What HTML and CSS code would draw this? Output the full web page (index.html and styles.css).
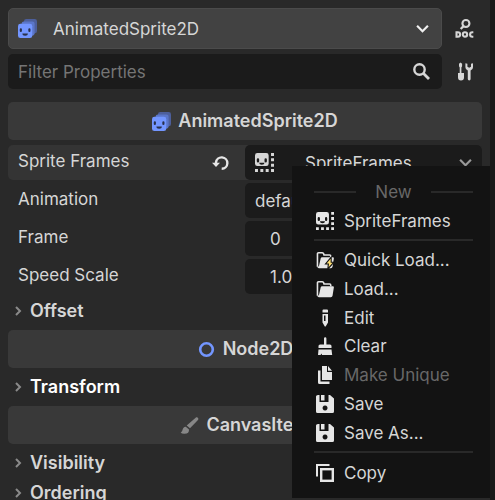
FILE: index.html
```html
<!DOCTYPE html>
<html lang="en">
<head>
<meta charset="utf-8">
<title>Inspector</title>
<link rel="stylesheet" href="styles.css">
</head>
<body>
<svg class="defs" aria-hidden="true">
  <symbol id="animated-sprite" viewBox="0 0 16 16">
    <rect x="5" y="0" width="11" height="12" rx="2" fill="#4d5f9b"/>
    <rect x="3" y="2" width="11" height="12" rx="2" fill="#5b76c8"/>
    <rect x="0" y="4" width="12" height="12" rx="2" fill="#7396ff"/>
    <path d="M1.500 8.700a.9.900 0 0 1 1.800 0v1.300a.9.900 0 0 1-1.800 0zM8.700 8.700a.9.900 0 0 1 1.800 0v1.300a.9.900 0 0 1-1.800 0zM3.700 12.300h4.600a2.300 1.900 0 0 1-4.600 0z" fill="#29304a"/>
  </symbol>
  <symbol id="sprite-frames" viewBox="0 0 16 16">
    <path fill-rule="evenodd" d="M2 0a2 2 0 0 0-2 2v7a2 2 0 0 0 2 2h7.500a2 2 0 0 0 2-2V2a2 2 0 0 0-2-2zM1.500 5.500a1 1 0 0 1 2 0v1.500a1 1 0 0 1-2 0zM8 5.500a1 1 0 0 1 2 0v1.500a1 1 0 0 1-2 0zM3.500 8.200h4.500a2.200 1.700 0 0 1-4.500 0zM13.500 0H16v2.500h-2.500zM13.500 4.500H16V7h-2.500zM13.500 9H16v2.500h-2.500zM13.500 13.500H16V16h-2.500zM9 13.500h2.500V16H9zM4.500 13.500H7V16H4.500zM0 13.500h2.500V16H0z"/>
  </symbol>
  <symbol id="folder" viewBox="0 0 16 16">
    <path d="M1.300 14V2.500q0-1 1-1h3.300q1 0 1.200 1l.3 1h5q1 0 1 1v1" fill="none" stroke="currentColor" stroke-width="1.400"/>
    <path d="M5.500 5.500H15q1 0 .9 1l-1.200 7.500q-.2 1.300-1.500 1.300H2.500q-1 0-1.400-1.300l1.500-.5L4.200 6.500q.2-1 1.300-1z"/>
  </symbol>
</svg>
<main class="inspector">
  <header class="tools">
    <button class="object" type="button">
      <svg class="icon"><use href="#animated-sprite"/></svg>
      <span class="object-name">AnimatedSprite2D</span>
      <svg class="chevron" viewBox="0 0 12 8"><path d="M1 1.500l5 5 5-5"/></svg>
    </button>
    <button class="tool" type="button" aria-label="Open documentation">
      <svg class="icon" viewBox="0 0 19 20"><g fill="none" stroke="currentColor"><circle cx="11" cy="4.800" r="3.700" stroke-width="2.200"/><path d="M8.500 7.500L5.500 10.500" stroke-width="2.400"/><path d="M1.100 14v4.700H2.500a2.350 2.350 0 0 0 0-4.700zM18.800 13.900h-1a2.400 2.400 0 0 0 0 4.800h1" stroke-width="2.200"/><circle cx="10" cy="16.300" r="2.300" stroke-width="2.200"/></g></svg>
    </button>
    <label class="filter">
      <input type="text" placeholder="Filter Properties" aria-label="Filter Properties">
      <svg class="search" viewBox="0 0 17 17"><g fill="none" stroke="currentColor"><circle cx="6.500" cy="6.500" r="5.200" stroke-width="2.400"/><path d="M10.300 10.300l5.700 5.700" stroke-width="2.800"/></g></svg>
    </label>
    <button class="tool" type="button" aria-label="Property tools">
      <svg class="icon" viewBox="0 0 19 19"><path d="M5.500 0.500l1.600 1.200v2.600l-.7 1.200V11h2.600v4.500a3 3 0 0 1-6 0V11h1.700V5.500L4 4.300V1.700zM10.400 1.200v4a3.700 3.700 0 0 0 2.400 3.400V17a1.400 1.400 0 0 0 2.800 0V8.600A3.700 3.700 0 0 0 18 5.200v-4l-2 .6v3l-1.800 1-1.800-1v-3z"/></svg>
    </button>
  </header>

  <section class="properties">
    <h2 class="category"><svg class="icon"><use href="#animated-sprite"/></svg>AnimatedSprite2D</h2>
    <div class="property active">
      <span class="name">Sprite Frames</span>
      <button class="revert" type="button" aria-label="Revert value"><svg viewBox="0 0 18 16"><path d="M4 9V7.500a5.700 5.700 0 1 1 5.700 6.300" fill="none" stroke="currentColor" stroke-width="2.400"/><path d="M0 7.800h8L4 12z"/></svg></button>
      <button class="value resource" type="button">
        <svg class="icon"><use href="#sprite-frames"/></svg>
        <span class="resource-name">SpriteFrames</span>
        <svg class="chevron" viewBox="0 0 12 8"><path d="M1 1.500l5 5 5-5"/></svg>
      </button>
    </div>
    <div class="property">
      <label class="name" for="animation">Animation</label>
      <select class="value" id="animation"><option>default</option></select>
    </div>
    <div class="property">
      <label class="name" for="frame">Frame</label>
      <input class="value number" id="frame" type="text" value="0">
    </div>
    <div class="property">
      <label class="name" for="speed">Speed Scale</label>
      <input class="value number" id="speed" type="text" value="1.0">
    </div>
    <button class="fold" type="button"><svg class="arrow" viewBox="0 0 7 10"><path d="M1 1l4 4-4 4"/></svg>Offset</button>

    <h2 class="category"><svg class="icon" viewBox="0 0 16 16"><circle cx="8" cy="8" r="5.300" fill="none" stroke="#7396ff" stroke-width="2.200"/></svg>Node2D</h2>
    <button class="fold changed" type="button"><svg class="arrow" viewBox="0 0 7 10"><path d="M1 1l4 4-4 4"/></svg>Transform</button>

    <h2 class="category"><svg class="icon brush" viewBox="0 0 19 19"><path d="M16.200 1.200a1.800 1.800 0 0 1 2 2.500L10 12.300 6.700 9.500zM5.800 10.700l3.200 2.900q.4 4.200-4.500 4.200-3 .1-3.800-1.500 1.600-.3 1.800-2.300.5-3 3.300-3.300z"/></svg>CanvasItem</h2>
    <button class="fold" type="button"><svg class="arrow" viewBox="0 0 7 10"><path d="M1 1l4 4-4 4"/></svg>Visibility</button>
    <button class="fold" type="button"><svg class="arrow" viewBox="0 0 7 10"><path d="M1 1l4 4-4 4"/></svg>Ordering</button>
  </section>

  <div class="menu" role="menu">
    <div class="menu-title">New</div>
    <button class="item" type="button" role="menuitem"><svg class="icon"><use href="#sprite-frames"/></svg>SpriteFrames</button>
    <hr>
    <div class="group">
      <button class="item" type="button" role="menuitem"><svg class="icon" viewBox="0 0 16 16"><use href="#folder"/><path d="M13.500 5.500L8.500 11.500h2.500l-.5 4.500 5.500-6h-2.500z" fill="#ffdf73" stroke="#131313" stroke-width="1"/></svg>Quick Load...</button>
      <button class="item" type="button" role="menuitem"><svg class="icon"><use href="#folder"/></svg>Load...</button>
      <button class="item" type="button" role="menuitem"><svg class="icon" viewBox="0 0 18 18"><path fill-rule="evenodd" d="M6.500 1.500q0-1 1-1h3.500q1 0 1 1v2H6.500zM6.500 5H12v8.500L9.700 17.500H8.800L6.500 13.500zM8 6.500v5.500h1.500V6.500z"/></svg>Edit</button>
      <button class="item" type="button" role="menuitem"><svg class="icon" viewBox="0 0 18 18"><path d="M8 1.500a1.200 1.200 0 0 1 2.400 0V7.500h3.500q1.600 0 1.600 1.600V11h-13V9.100q0-1.600 1.600-1.600H8zM2.500 12.500h13l.7 5.500H6l-.5-1.500L4.500 18H2z"/></svg>Clear</button>
      <button class="item" type="button" role="menuitem" disabled><svg class="icon" viewBox="0 0 18 18"><path d="M6 0h5v6h5v8H6zM12 0l4 4.800h-4zM2 4.500h2.500v11h9V18H3.500Q2 18 2 16.500z"/></svg>Make Unique</button>
      <button class="item" type="button" role="menuitem"><svg class="icon" viewBox="0 0 18 18"><path fill-rule="evenodd" d="M2 0h1.500v7h9V0H14l4 3.500V16.500q0 1.500-1.500 1.500h-15Q0 18 0 16.500v-15Q0 0 2 0zM5 0h3.500v5.500H5zM9 10.500a2.500 2.500 0 1 0 .1 0z"/></svg>Save</button>
      <button class="item" type="button" role="menuitem"><svg class="icon" viewBox="0 0 18 18"><path fill-rule="evenodd" d="M2 0h1.500v7h9V0H14l4 3.500V16.500q0 1.500-1.500 1.500h-15Q0 18 0 16.500v-15Q0 0 2 0zM5 0h3.500v5.500H5zM9 10.500a2.500 2.500 0 1 0 .1 0z"/></svg>Save As...</button>
    </div>
    <hr>
    <button class="item" type="button" role="menuitem"><svg class="icon" viewBox="0 0 18 18"><path d="M1 12.500V1h12.500" fill="none" stroke="currentColor" stroke-width="2"/><rect x="5.200" y="5.200" width="11.600" height="11.600" fill="none" stroke="currentColor" stroke-width="2.400"/></svg>Copy</button>
  </div>
</main>
</body>
</html>
```
FILE: styles.css
```css
* {
  box-sizing: border-box;
}

body {
  margin: 0;
  height: 100vh;
  overflow: hidden;
  background: #292929;
}

body,
button,
input,
select {
  font: 17px/24px Inter, "Liberation Sans", sans-serif;
  font-optical-sizing: none;
  color: #d6d6d6;
}

button,
input,
select {
  margin: 0;
  padding: 0;
  border: 0;
  background: none;
  appearance: none;
  text-align: left;
}

svg {
  display: block;
  flex: none;
  fill: currentColor;
}

.defs {
  position: absolute;
  width: 0;
  height: 0;
}

.icon {
  width: 19px;
  height: 19px;
}

.chevron {
  width: 13px;
  height: 9px;
  fill: none;
  stroke: currentColor;
  stroke-width: 2;
}

.inspector {
  position: relative;
  height: 100vh;
  overflow: hidden;
  padding: 8px;
  border-right: 5px solid #191919;
}

.tools {
  display: grid;
  grid-template-columns: 1fr 40px;
  grid-template-rows: 41px 35px;
  row-gap: 5px;
  margin-bottom: 13px;
}

.object {
  display: flex;
  align-items: center;
  gap: 16px;
  padding: 0 12px 0 9px;
  border: 1px solid #4b4b4b;
  border-radius: 5px;
  background: #424242;
}

.object-name {
  flex: 1;
}

.object .chevron {
  color: #f0f0f0;
}

.tool {
  display: flex;
  align-items: center;
  justify-content: center;
  padding-left: 4px;
}

.filter {
  display: flex;
  align-items: center;
  padding: 0 12px 0 10px;
  border-radius: 5px;
  background: #1b1b1b;
}

.filter input {
  flex: 1;
  min-width: 0;
}

.filter input::placeholder {
  color: #757575;
  opacity: 1;
}

.search {
  width: 17px;
  height: 17px;
}

.properties {
  display: flex;
  flex-direction: column;
  gap: 3px;
}

.category,
.fold {
  font-size: 18px;
  font-weight: 600;
  font-optical-sizing: auto;
}

.category {
  display: flex;
  flex: none;
  align-items: center;
  justify-content: center;
  gap: 7px;
  height: 38px;
  margin: 0 0 2px;
  border-radius: 5px;
  background: #393939;
}

.brush {
  color: #878787;
}

.property {
  display: grid;
  flex: none;
  grid-template-columns: 1fr 1fr;
  align-items: center;
  height: 35px;
  border-radius: 5px;
}

.property.active {
  grid-template-columns: 1fr 18px 15px 50%;
  background: #343434;
}

.name {
  padding: 0 0 4px 10px;
}

.revert svg {
  width: 18px;
  height: 16px;
  color: #e6e6e6;
}

.value {
  height: 35px;
  min-width: 0;
  padding: 0 10px;
  border-radius: 5px;
  background: #1b1b1b;
}

.resource {
  grid-column: 4;
  display: flex;
  align-items: center;
}

.resource-name {
  flex: 1;
  padding-left: 31px;
}

.resource .chevron {
  color: #999999;
}

.number {
  padding-left: 25px;
}

.fold {
  display: flex;
  flex: none;
  align-items: center;
  gap: 8px;
  height: 27px;
  padding-left: 7px;
}

.fold + .category {
  margin-top: 3px;
}

.arrow {
  width: 7px;
  height: 10px;
  fill: none;
  stroke: #8a8a8a;
  stroke-width: 2;
}

.changed {
  color: #ffffff;
}

.menu {
  position: absolute;
  top: 166px;
  right: -5px;
  width: 203px;
  padding: 12px 22px 11px;
  background: #131313;
}

.menu-title {
  display: flex;
  align-items: center;
  gap: 19px;
  height: 28px;
  color: #686868;
}

.menu-title::before,
.menu-title::after {
  content: "";
  flex: 1;
  height: 2px;
  background: #292929;
}

.menu hr {
  height: 2px;
  margin: 4px 0 5px;
  border: 0;
  background: #292929;
}

.group {
  display: grid;
  grid-auto-rows: 1fr;
  height: 201px;
}

.item {
  display: flex;
  align-items: center;
  gap: 10px;
  width: 100%;
  height: 29px;
  padding-left: 2px;
}

.group .item {
  height: auto;
}

.item .icon {
  width: 18px;
  height: 18px;
  color: #e6e6e6;
}

.item:disabled {
  color: #686868;
}
```
